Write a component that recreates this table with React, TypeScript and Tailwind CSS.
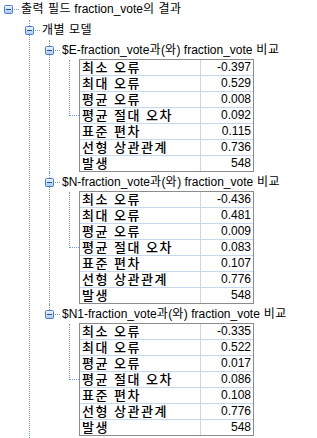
import type { ReactNode } from 'react'

const DOT = 'border-dotted border-[#6f9de0]'

const LABELS = ['최소 오류', '최대 오류', '평균 오류', '평균 절대 오차', '표준 편차', '선형 상관관계', '발생']

const MODELS = [
  { name: '$E-fraction_vote', values: ['-0.397', '0.529', '0.008', '0.092', '0.115', '0.736', '548'] },
  { name: '$N-fraction_vote', values: ['-0.436', '0.481', '0.009', '0.083', '0.107', '0.776', '548'] },
  { name: '$N1-fraction_vote', values: ['-0.335', '0.522', '0.017', '0.086', '0.108', '0.776', '548'] },
]

// Hangul in the reference is wider than Noto's, so spread only those runs
function Wide({ text, cls }: { text: string; cls: string }) {
  return (
    <>
      {text.split(/([\uAC00-\uD7A3 ]*[\uAC00-\uD7A3])/).map((s, i) =>
        /[\uAC00-\uD7A3]/.test(s) ? (
          <span key={i} className={cls}>
            {s}
          </span>
        ) : (
          s
        ),
      )}
    </>
  )
}

function Toggle() {
  return (
    <svg width="9" height="9" viewBox="0 0 9 9" className="block shrink-0">
      <defs>
        <linearGradient id="tg" x1="0" y1="0" x2="0" y2="1">
          <stop offset="0" stopColor="#f1f7fe" />
          <stop offset="1" stopColor="#a6c6ee" />
        </linearGradient>
      </defs>
      <rect x="0.5" y="0.5" width="8" height="8" rx="1" fill="url(#tg)" stroke="#4a7bc8" />
      <path d="M2 4.5h5" stroke="#1f4f9e" />
    </svg>
  )
}

function Title({ text }: { text: string }) {
  return (
    <div className="-ml-[5px] flex h-5 items-center leading-5">
      <Toggle />
      <span className={`ml-px w-[5px] border-t ${DOT}`} />
      <span className="ml-[2px] whitespace-nowrap">
        <Wide text={text} cls="tracking-[0.5px]" />
      </span>
    </div>
  )
}

function Item({ last, title, children }: { last?: boolean; title: string; children?: ReactNode }) {
  return (
    <div className="flex">
      <div className="flex w-px shrink-0 flex-col">
        <div className={`h-[10px] border-l ${DOT}`} />
        {!last && <div className={`flex-1 border-l ${DOT}`} />}
      </div>
      <div className="min-w-0 flex-1">
        <Title text={title} />
        {children}
      </div>
    </div>
  )
}

function StatsTable({ values }: { values: string[] }) {
  return (
    <div className="-mt-px flex">
      <div className={`mt-px h-[56px] w-[10px] shrink-0 border-b border-l ${DOT}`} />
      <div className="w-[175px] shrink-0 border border-[#8c8c8c] bg-white">
        {LABELS.map((label, i) => (
          <div key={label} className={`box-content flex h-[15px] ${i > 0 ? 'border-t border-[#c7d7ec]' : ''}`}>
            <div className="w-[121px] shrink-0 overflow-hidden whitespace-nowrap border-r border-[#c7d7ec] pl-[2px] text-[13px] font-medium leading-[15px] tracking-[1.5px] text-black">
              {label}
            </div>
            <div className="flex-1 pr-[2px] text-right text-[12px] leading-[15px] text-black">{values[i]}</div>
          </div>
        ))}
      </div>
    </div>
  )
}

export default function App() {
  return (
    <div className="h-[438px] w-[317px] overflow-hidden bg-white font-['Liberation_Sans','Noto_Sans_CJK_KR',sans-serif] text-[12px] text-black">
      <div className="-mt-px pl-[9px]">
        <Title text="출력 필드 fraction_vote의 결과" />
      </div>
      <div className="mt-px pl-[29px]">
        <Item title="개별 모델">
          <div className="pb-3 pl-[19px]">
            {MODELS.map((m, i) => (
              <Item key={m.name} last={i === MODELS.length - 1} title={`${m.name}과(와) fraction_vote 비교`}>
                <div className="pl-[19px]">
                  <StatsTable values={m.values} />
                </div>
              </Item>
            ))}
          </div>
        </Item>
      </div>
    </div>
  )
}
